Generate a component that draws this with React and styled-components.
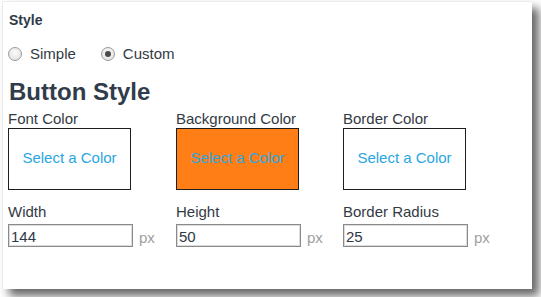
import React from "react";
import styled, { createGlobalStyle } from "styled-components";

const Global = createGlobalStyle`
  html, body { margin: 0; padding: 0; background: #ffffff; overflow: hidden; }
  body { font-family: "Liberation Sans", Arial, sans-serif; }
  * { box-sizing: border-box; }
`;

const Page = styled.div`
  height: 297px;
  padding: 1px 0 0 2px;
`;

const Panel = styled.div`
  width: 530px;
  height: 288px;
  background: #ffffff;
  border-left: 1px solid #ececec;
  border-top: 1px solid #ececec;
  box-shadow: 7px 7px 9px rgba(0, 0, 0, 0.6);
  padding: 0 0 0 5px;
  color: #333;
`;

const SectionTitle = styled.div`
  margin-top: 10px;
  padding-left: 1px;
  font-size: 14px;
  line-height: 16px;
  font-weight: bold;
  color: #2f3a47;
`;

const RadioRow = styled.div`
  margin-top: 17px;
  height: 18px;
  display: flex;
  align-items: center;
  gap: 25px;
  font-size: 15px;
  line-height: 18px;
  color: #333a44;
`;

const RadioOption = styled.label`
  display: flex;
  align-items: center;
  gap: 8px;
`;

const RadioDot = styled.span`
  width: 14px;
  height: 14px;
  border-radius: 50%;
  border: 1px solid #9a9a9a;
  background: radial-gradient(circle at 50% 40%, #fafafa 0%, #e6e6e6 70%, #d8d8d8 100%);
  display: flex;
  align-items: center;
  justify-content: center;
  &::after {
    content: "";
    width: 6px;
    height: 6px;
    border-radius: 50%;
    background: ${(p) => (p.$checked ? "#4a4a4a" : "transparent")};
  }
`;

const Heading = styled.h2`
  margin: 15px 0 0;
  padding-left: 1px;
  font-size: 24px;
  line-height: 28px;
  font-weight: bold;
  color: #303c4a;
`;

const Grid = styled.div`
  display: grid;
  grid-template-columns: 168px 167px 1fr;
`;

const Field = styled.div`
  display: flex;
  flex-direction: column;
`;

const Label = styled.div`
  margin-top: ${(p) => p.$top}px;
  font-size: 15px;
  line-height: 17px;
  color: #333a44;
`;

const Swatch = styled.div`
  margin-top: 1px;
  width: 123px;
  height: 62px;
  border: 1px solid #1e1e1e;
  background: ${(p) => p.$bg};
  display: flex;
  align-items: center;
  justify-content: center;
  padding-bottom: 4px;
  font-size: 15px;
  color: #2aa6e0;
`;

const InputRow = styled.div`
  margin-top: 4px;
  display: flex;
  align-items: center;
`;

const TextInput = styled.input`
  width: 125px;
  height: 23px;
  margin: 0;
  padding: 2px 2px 0;
  border: 1px solid #8a8a8a;
  box-shadow: inset 0 0 0 1px #dcdcdc;
  font-family: "Liberation Sans", Arial, sans-serif;
  font-size: 15px;
  color: #2f3845;
  background: #fff;
  outline: none;
`;

const Unit = styled.span`
  margin-left: 6px;
  padding-top: 3px;
  font-size: 15px;
  color: #a0a0a0;
`;

const colors = [
  { label: "Font Color", bg: "#ffffff" },
  { label: "Background Color", bg: "#ff7f16" },
  { label: "Border Color", bg: "#ffffff" },
];

const dims = [
  { label: "Width", value: "144" },
  { label: "Height", value: "50" },
  { label: "Border Radius", value: "25" },
];

export default function App() {
  return (
    <Page>
      <Global />
      <Panel>
        <SectionTitle>Style</SectionTitle>
        <RadioRow>
          <RadioOption>
            <RadioDot />
            Simple
          </RadioOption>
          <RadioOption>
            <RadioDot $checked />
            Custom
          </RadioOption>
        </RadioRow>
        <Heading>Button Style</Heading>
        <Grid>
          {colors.map((c) => (
            <Field key={c.label}>
              <Label $top={4}>{c.label}</Label>
              <Swatch $bg={c.bg}>Select a Color</Swatch>
            </Field>
          ))}
          {dims.map((d) => (
            <Field key={d.label}>
              <Label $top={13}>{d.label}</Label>
              <InputRow>
                <TextInput defaultValue={d.value} />
                <Unit>px</Unit>
              </InputRow>
            </Field>
          ))}
        </Grid>
      </Panel>
    </Page>
  );
}
